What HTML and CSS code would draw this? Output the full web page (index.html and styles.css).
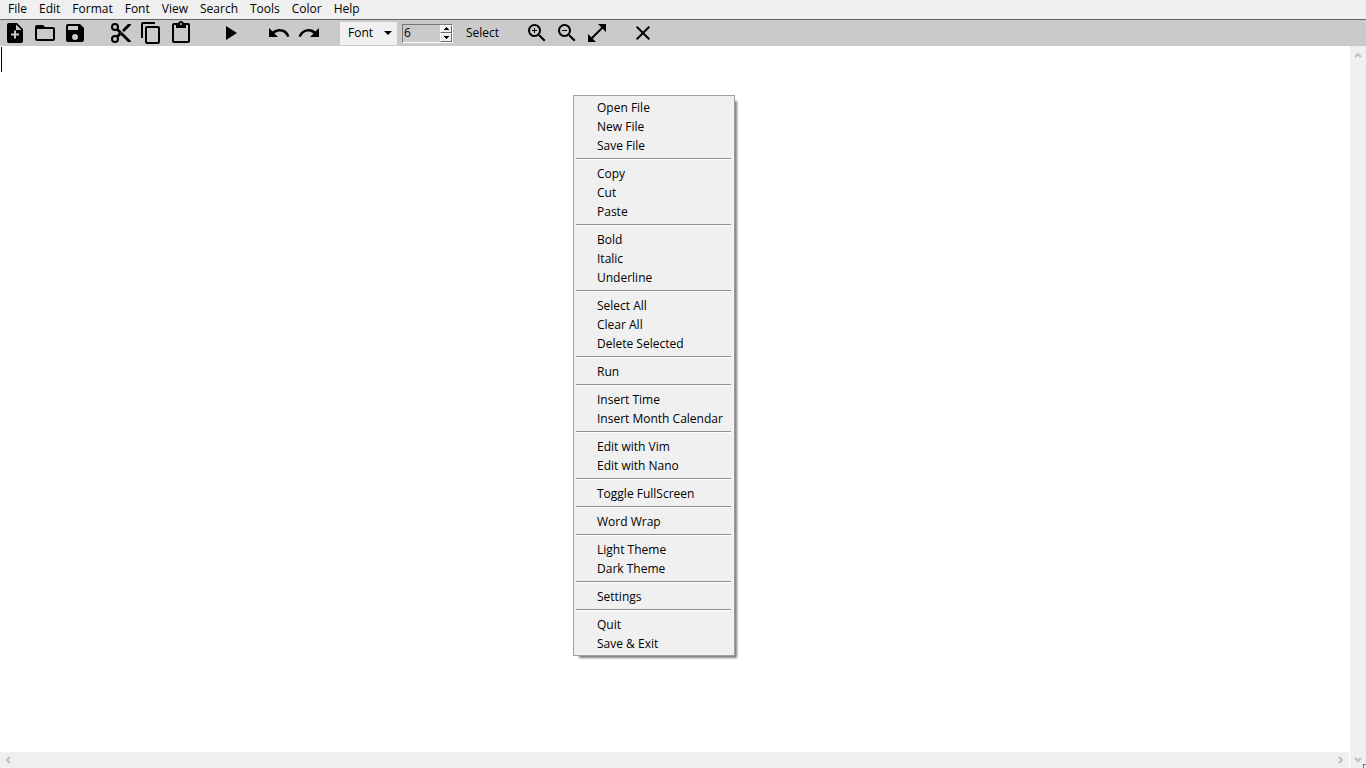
FILE: index.html
```html
<!DOCTYPE html>
<html lang="en">
<head>
<meta charset="utf-8">
<title>Text Editor</title>
<link rel="stylesheet" href="styles.css">
</head>
<body>
<div class="app">
  <nav class="menubar" aria-label="Main menu">
    <button type="button">File</button>
    <button type="button">Edit</button>
    <button type="button">Format</button>
    <button type="button">Font</button>
    <button type="button">View</button>
    <button type="button">Search</button>
    <button type="button">Tools</button>
    <button type="button">Color</button>
    <button type="button">Help</button>
  </nav>

  <div class="toolbar" role="toolbar" aria-label="Tools">
    <div class="group">
      <button type="button" aria-label="New file"><svg viewBox="0 0 24 24"><path d="M14 2H6a2 2 0 0 0-2 2v16c0 1.100.9 2 2 2h12a2 2 0 0 0 2-2V8zm2 12.500h-3v3h-2v-3H8v-2h3v-3h2v3h3zM13 9V3.500L18.500 9z"/></svg></button>
      <button type="button" aria-label="Open file"><svg viewBox="0 0 24 24"><path d="M20 6h-8l-2-2H4a2 2 0 0 0-2 2v12c0 1.100.9 2 2 2h16a2 2 0 0 0 2-2V8a2 2 0 0 0-2-2zm0 12H4V8h16z"/></svg></button>
      <button type="button" aria-label="Save file"><svg viewBox="0 0 24 24"><path d="M17 3H5a2 2 0 0 0-2 2v14c0 1.100.9 2 2 2h14a2 2 0 0 0 2-2V7zm-5 16a3 3 0 1 1 0-6 3 3 0 0 1 0 6zm3-10H5V5h10z"/></svg></button>
    </div>
    <div class="group">
      <button type="button" aria-label="Cut"><svg viewBox="0 0 24 24"><path d="M9.640 7.640c.23-.5.360-1.050.360-1.640a4 4 0 1 0-4 4c.590 0 1.140-.13 1.640-.36L10 12l-2.360 2.360A3.900 3.900 0 0 0 6 14a4 4 0 1 0 4 4c0-.59-.13-1.140-.36-1.640L12 14l7 7h3v-1zM6 8a2 2 0 1 1 0-4 2 2 0 0 1 0 4zm0 12a2 2 0 1 1 0-4 2 2 0 0 1 0 4zm6-7.500a.5.5 0 1 1 0-1 .5.5 0 0 1 0 1zM19 3l-6 6 2 2 7-7V3z"/></svg></button>
      <button type="button" aria-label="Copy"><svg viewBox="0 0 24 24"><path d="M16 1H4a2 2 0 0 0-2 2v14h2V3h12zm3 4H8a2 2 0 0 0-2 2v14c0 1.100.9 2 2 2h11a2 2 0 0 0 2-2V7a2 2 0 0 0-2-2zm0 16H8V7h11z"/></svg></button>
      <button type="button" aria-label="Paste"><svg viewBox="0 0 24 24"><path d="M19 2h-4.180a3 3 0 0 0-5.640 0H5a2 2 0 0 0-2 2v16c0 1.100.9 2 2 2h14a2 2 0 0 0 2-2V4a2 2 0 0 0-2-2zm-7 0a1 1 0 1 1 0 2 1 1 0 0 1 0-2zm7 18H5V4h2v3h10V4h2z"/></svg></button>
    </div>
    <div class="group run">
      <button type="button" aria-label="Run"><svg viewBox="0 0 24 24"><path d="M7 5v14l11-7z"/></svg></button>
    </div>
    <div class="group">
      <button type="button" aria-label="Undo"><svg viewBox="0 0 24 24"><path d="M12.500 8c-2.650 0-5.050 1-6.900 2.600L2 7v9h9l-3.620-3.620A8 8 0 0 1 20.100 16l2.370-.78A10.500 10.500 0 0 0 12.500 8z"/></svg></button>
      <button type="button" aria-label="Redo"><svg viewBox="0 0 24 24"><path d="M18.400 10.600A10.500 10.500 0 0 0 1.540 15.220L3.900 16a8 8 0 0 1 12.720-3.620L13 16h9V7z"/></svg></button>
    </div>
    <button type="button" class="font-button">Font<svg viewBox="0 0 8 4"><path d="M0 0h8L4 4z"/></svg></button>
    <div class="spinbox">
      <input type="number" value="6" aria-label="Font size">
      <div class="steps">
        <button type="button" aria-label="Increase"><svg viewBox="0 0 6 3"><path d="M0 3h6L3 0z"/></svg></button>
        <button type="button" aria-label="Decrease"><svg viewBox="0 0 6 3"><path d="M0 0h6L3 3z"/></svg></button>
      </div>
    </div>
    <button type="button" class="select-button">Select</button>
    <div class="group">
      <button type="button" aria-label="Zoom in"><svg viewBox="0 0 24 24"><path d="M15.500 14h-.79l-.28-.27a6.500 6.500 0 1 0-.7.700l.27.280v.790l5 4.990L20.490 19zm-6 0a4.500 4.500 0 1 1 0-9 4.500 4.500 0 0 1 0 9zm2.500-4h-2v2H9v-2H7V9h2V7h1v2h2z"/></svg></button>
      <button type="button" aria-label="Zoom out"><svg viewBox="0 0 24 24"><path d="M15.500 14h-.79l-.28-.27a6.500 6.500 0 1 0-.7.700l.27.280v.790l5 4.990L20.490 19zm-6 0a4.500 4.500 0 1 1 0-9 4.500 4.500 0 0 1 0 9zM7 9h5v1H7z"/></svg></button>
      <button type="button" aria-label="Full screen"><svg viewBox="0 0 24 24"><path d="M21 11V3h-8l3.290 3.290-10 10L3 13v8h8l-3.290-3.290 10-10z"/></svg></button>
    </div>
    <div class="group">
      <button type="button" aria-label="Close"><svg viewBox="0 0 24 24"><path d="M19 6.410 17.590 5 12 10.590 6.410 5 5 6.410 10.590 12 5 17.590 6.410 19 12 13.410 17.590 19 19 17.590 13.410 12z"/></svg></button>
    </div>
  </div>

  <main class="workspace">
    <div class="page">
      <textarea class="editor" aria-label="Document"></textarea>
      <span class="caret"></span>
    </div>
    <div class="scroll vertical">
      <button type="button" aria-label="Scroll up"><svg viewBox="0 0 8 8"><path d="M1 6 4 3 7 6"/></svg></button>
      <button type="button" aria-label="Scroll down"><svg viewBox="0 0 8 8"><path d="M1 2 4 5 7 2"/></svg></button>
    </div>
    <div class="scroll horizontal">
      <button type="button" aria-label="Scroll left"><svg viewBox="0 0 8 8"><path d="M6 1 3 4 6 7"/></svg></button>
      <button type="button" aria-label="Scroll right"><svg viewBox="0 0 8 8"><path d="M2 1 5 4 2 7"/></svg></button>
    </div>
  </main>

  <div class="context-menu" role="menu">
    <button type="button" role="menuitem">Open File</button>
    <button type="button" role="menuitem">New File</button>
    <button type="button" role="menuitem">Save File</button>
    <hr>
    <button type="button" role="menuitem">Copy</button>
    <button type="button" role="menuitem">Cut</button>
    <button type="button" role="menuitem">Paste</button>
    <hr>
    <button type="button" role="menuitem">Bold</button>
    <button type="button" role="menuitem">Italic</button>
    <button type="button" role="menuitem">Underline</button>
    <hr>
    <button type="button" role="menuitem">Select All</button>
    <button type="button" role="menuitem">Clear All</button>
    <button type="button" role="menuitem">Delete Selected</button>
    <hr>
    <button type="button" role="menuitem">Run</button>
    <hr>
    <button type="button" role="menuitem">Insert Time</button>
    <button type="button" role="menuitem">Insert Month Calendar</button>
    <hr>
    <button type="button" role="menuitem">Edit with Vim</button>
    <button type="button" role="menuitem">Edit with Nano</button>
    <hr>
    <button type="button" role="menuitem">Toggle FullScreen</button>
    <hr>
    <button type="button" role="menuitem">Word Wrap</button>
    <hr>
    <button type="button" role="menuitem">Light Theme</button>
    <button type="button" role="menuitem">Dark Theme</button>
    <hr>
    <button type="button" role="menuitem">Settings</button>
    <hr>
    <button type="button" role="menuitem">Quit</button>
    <button type="button" role="menuitem">Save &amp; Exit</button>
  </div>
</div>
</body>
</html>
```
FILE: styles.css
```css
* {
  box-sizing: border-box;
}

body {
  margin: 0;
  color: #000;
  font: 12px/18px "Segoe UI", "Open Sans", "Noto Sans", sans-serif;
}

button {
  margin: 0;
  padding: 0;
  border: 0;
  background: none;
  color: inherit;
  font: inherit;
}

svg {
  display: block;
  fill: currentColor;
}

.app {
  display: flex;
  flex-direction: column;
  height: 100vh;
}

.menubar {
  display: flex;
  gap: 12px;
  padding: 0 8px;
  background: #f0f0f0;
  border-bottom: 1px solid #646464;
}

.menubar button {
  padding-bottom: 1px;
}

.toolbar {
  display: flex;
  align-items: center;
  height: 26px;
  background: #cacaca;
}

.group {
  display: flex;
  margin-right: 16px;
}

.group button {
  display: flex;
  justify-content: center;
  width: 30px;
}

.group svg {
  width: 24px;
  height: 24px;
}

.group.run {
  margin: 0 18px 0 4px;
}

.font-button {
  display: flex;
  align-items: center;
  justify-content: space-between;
  width: 57px;
  height: 23px;
  padding: 0 5px 0 8px;
  background: #f0f0f0;
}

.font-button svg {
  width: 8px;
  height: 4px;
}

.spinbox {
  display: flex;
  width: 51px;
  height: 19px;
  margin: 0 13px 0 5px;
  border: 1px solid;
  border-color: #777 #fff #fff #777;
}

.spinbox input {
  flex: 1;
  min-width: 0;
  padding: 0 1px;
  border: 0;
  outline: 0;
  background: transparent;
  font: inherit;
  appearance: textfield;
}

.steps {
  display: flex;
  flex-direction: column;
  width: 12px;
}

.steps button {
  display: flex;
  flex: 1;
  align-items: center;
  justify-content: center;
  background: #f0f0f0;
  border: 1px solid;
  border-color: #fff #696969 #696969 #fff;
}

.steps svg {
  width: 6px;
  height: 3px;
  shape-rendering: crispEdges;
}

.select-button {
  width: 32px;
  margin-right: 24px;
  text-align: left;
}

.workspace {
  display: grid;
  flex: 1;
  grid-template: 1fr 16px / 1fr 16px;
  min-height: 0;
}

.page {
  position: relative;
  display: flex;
}

.editor {
  flex: 1;
  padding: 0 1px;
  border: 0;
  outline: 0;
  resize: none;
  background: #fff;
  caret-color: transparent;
  font: 16px/26px "Segoe UI", "Open Sans", sans-serif;
}

.caret {
  position: absolute;
  top: 1px;
  left: 1px;
  width: 1px;
  height: 25px;
  background: #000;
}

.scroll {
  display: flex;
  justify-content: space-between;
  background: #f0f0f0;
}

.scroll.vertical {
  position: relative;
  flex-direction: column;
  grid-row: 1 / 3;
  grid-column: 2;
  padding-top: 1px;
}

/* window resize corner */
.scroll.vertical::after {
  content: "";
  position: absolute;
  right: 0;
  bottom: 0;
  width: 2px;
  height: 3px;
  border: 1px solid #777;
  border-width: 1px 0 0 1px;
}

.scroll.horizontal {
  grid-row: 2;
  grid-column: 1;
  margin-right: 1px;
}

.scroll button {
  display: grid;
  place-items: center;
  width: 16px;
  height: 16px;
}

.scroll svg {
  width: 8px;
  height: 8px;
  fill: none;
  stroke: #bfbfbf;
  stroke-width: 2;
}

.context-menu {
  position: absolute;
  top: 95px;
  left: 573px;
  display: flex;
  flex-direction: column;
  width: 162px;
  padding: 2px;
  background: #f0f0f0;
  border: 1px solid #a0a0a0;
  box-shadow: 4px 4px 2px -2px #808080;
}

.context-menu button {
  padding: 1px 0 0 21px;
  text-align: left;
}

.context-menu hr {
  width: 155px;
  margin: 3px 0 4px;
  border: 0;
  border-top: 1px solid #909090;
  border-bottom: 1px solid #fff;
}
```
